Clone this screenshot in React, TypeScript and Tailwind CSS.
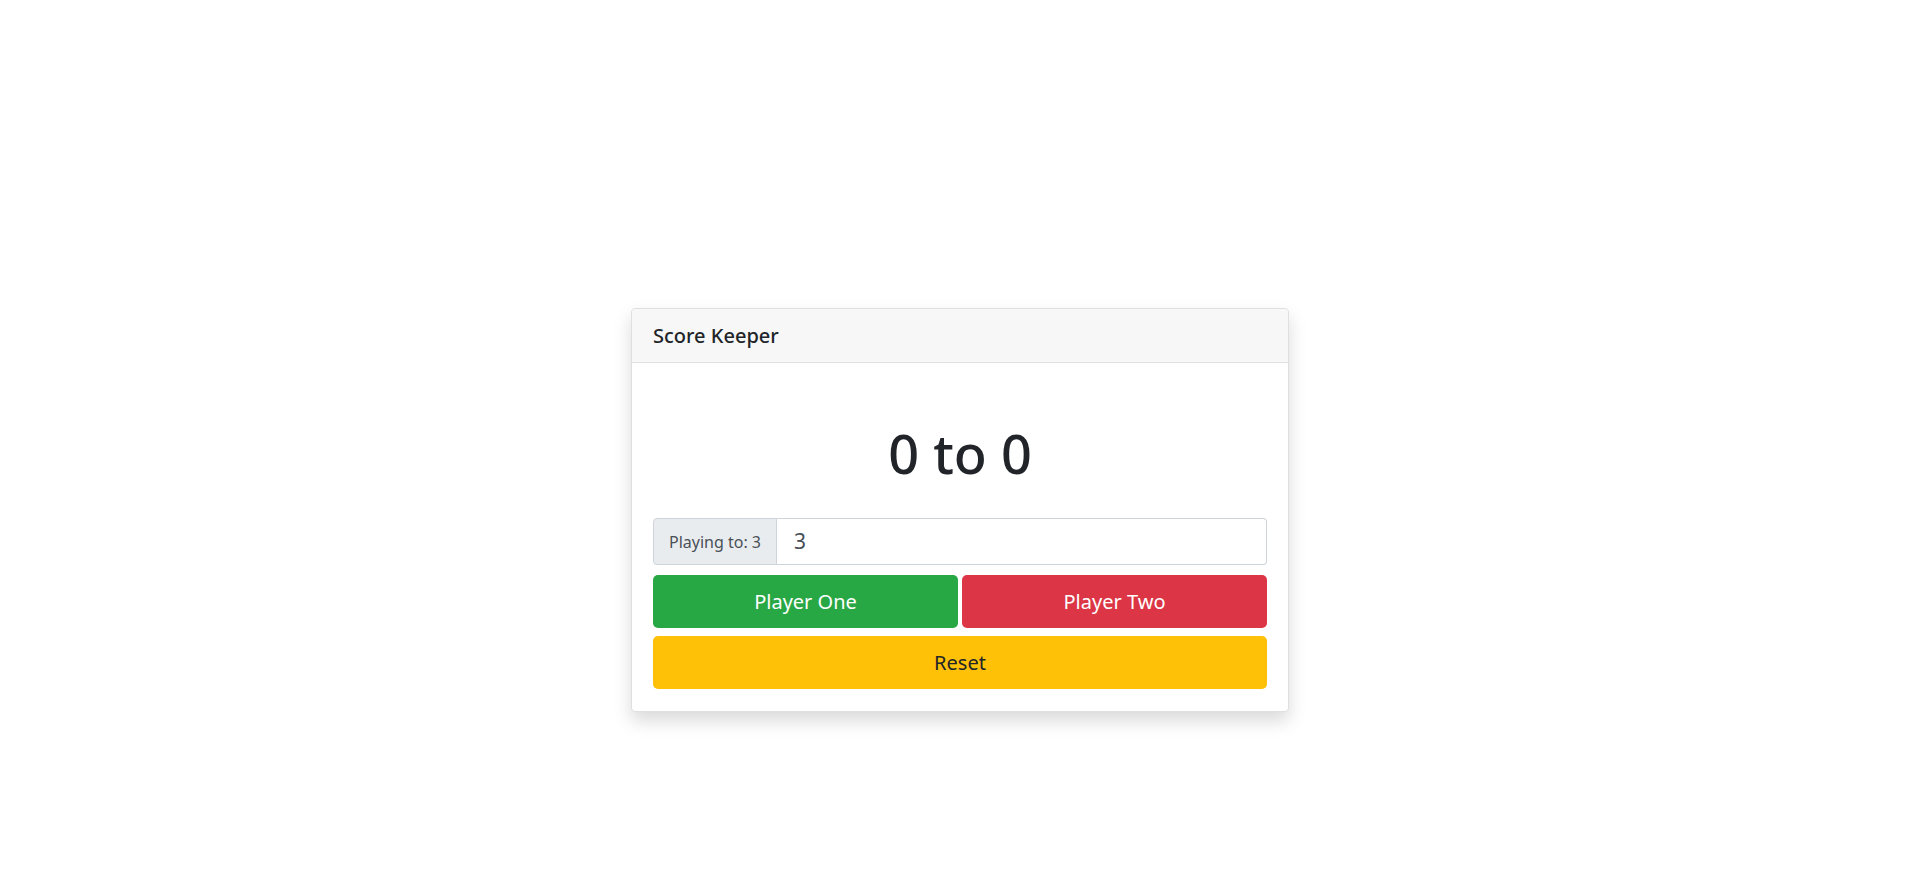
import React, { useState } from "react";

export default function App() {
  const [p1, setP1] = useState(0);
  const [p2, setP2] = useState(0);
  const [target, setTarget] = useState("3");

  return (
    <div
      className="min-h-[880px] w-full bg-white flex justify-center items-start pt-[308px]"
      style={{ fontFamily: '"Noto Sans", "Open Sans", sans-serif' }}
    >
      <div className="w-[658px] bg-white border border-[#dfdfdf] rounded-[4px] shadow-[0_9px_18px_rgba(0,0,0,0.15)] flex flex-col">
        <div className="h-[54px] shrink-0 bg-[#f7f7f7] border-b border-[#dfdfdf] rounded-t-[4px] px-[21px] flex items-center">
          <h5 className="text-[20px] font-medium text-[#212529] leading-none">Score Keeper</h5>
        </div>
        <div className="px-[21px] pt-[22px] pb-[22px] flex flex-col">
          <h1 className="text-center text-[54px] leading-[68px] text-[#212529] font-medium mt-[34px] mb-[31px]">
            {p1} to {p2}
          </h1>
          <div className="flex h-[47px]">
            <div className="w-[124px] shrink-0 bg-[#e9ecef] border border-[#ced4da] rounded-l-[4px] flex items-center justify-center text-[16px] text-[#495057]">
              Playing to: {target}
            </div>
            <input
              type="number"
              value={target}
              onChange={(e) => setTarget(e.target.value)}
              className="flex-1 min-w-0 border border-l-0 border-[#ced4da] rounded-r-[4px] pl-[17px] text-[21px] text-[#495057] outline-none bg-white [appearance:textfield]"
            />
          </div>
          <div className="grid grid-cols-2 gap-[4px] mt-[10px]">
            <button
              onClick={() => setP1(p1 + 1)}
              className="h-[53px] rounded-[5px] bg-[#28a745] text-white text-[20px]"
            >
              Player One
            </button>
            <button
              onClick={() => setP2(p2 + 1)}
              className="h-[53px] rounded-[5px] bg-[#dc3545] text-white text-[20px]"
            >
              Player Two
            </button>
          </div>
          <button
            onClick={() => {
              setP1(0);
              setP2(0);
            }}
            className="h-[53px] mt-[8px] rounded-[5px] bg-[#ffc107] text-[#212529] text-[20px]"
          >
            Reset
          </button>
        </div>
      </div>
    </div>
  );
}
